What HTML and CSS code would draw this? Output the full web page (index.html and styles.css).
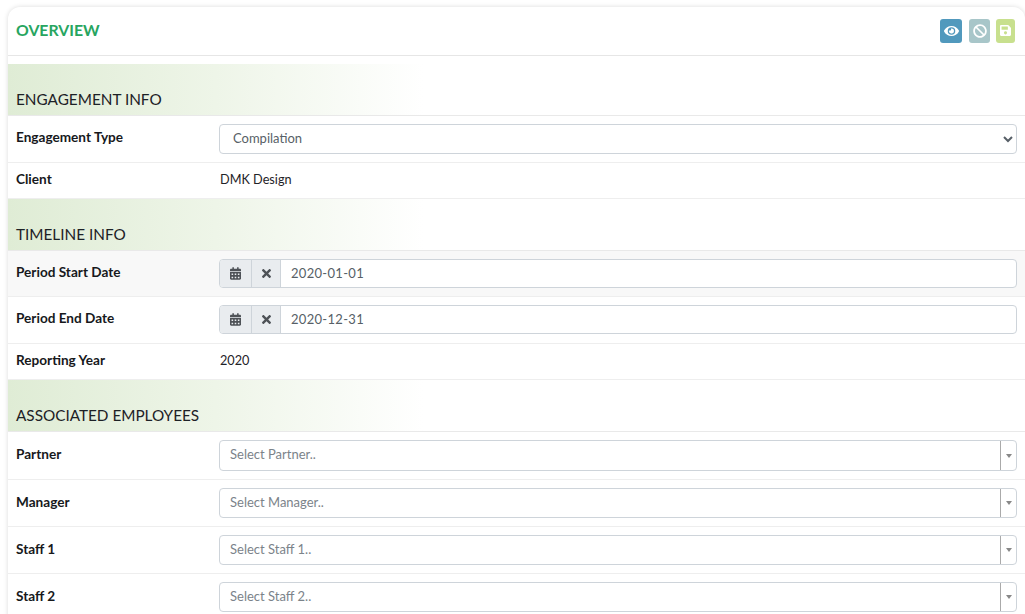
FILE: index.html
```html
<!DOCTYPE html>
<html lang="en">
<head>
<meta charset="utf-8">
<title>Overview</title>
<link rel="stylesheet" href="styles.css">
</head>
<body>
<main class="card">
  <header class="card-head">
    <h1 class="card-title">OVERVIEW</h1>
    <div class="actions">
      <button class="btn btn-view" type="button" aria-label="View"><svg class="btn-ico eye" viewBox="0 0 576 512"><path d="M572.52 241.4C518.29 135.59 410.93 64 288 64S57.68 135.64 3.48 241.41a32.35 32.35 0 0 0 0 29.19C57.71 376.41 165.07 448 288 448s230.32-71.64 284.52-177.41a32.35 32.35 0 0 0 0-29.19zM288 400a144 144 0 1 1 144-144 143.93 143.93 0 0 1-144 144zm0-240a95.31 95.31 0 0 0-25.31 3.79 47.85 47.85 0 0 1-66.9 66.9A95.78 95.78 0 1 0 288 160z"/></svg></button>
      <button class="btn btn-cancel" type="button" aria-label="Cancel"><svg class="btn-ico" viewBox="0 0 512 512"><path d="M256 8C119.034 8 8 119.033 8 256s111.034 248 248 248 248-111.034 248-248S392.967 8 256 8zm130.108 117.892c65.448 65.448 70 165.481 20.677 235.637L150.47 105.216c70.204-49.356 170.226-44.735 235.638 20.676zM125.892 386.108c-65.448-65.448-70-165.481-20.677-235.637L361.53 406.784c-70.203 49.356-170.226 44.736-235.638-20.676z"/></svg></button>
      <button class="btn btn-save" type="button" aria-label="Save"><svg class="btn-ico save" viewBox="0 0 448 512"><path d="M433.941 129.941l-83.882-83.882A48 48 0 0 0 316.118 32H48C21.49 32 0 53.49 0 80v352c0 26.51 21.49 48 48 48h352c26.51 0 48-21.49 48-48V163.882a48 48 0 0 0-14.059-33.941zM224 416c-35.346 0-64-28.654-64-64 0-35.346 28.654-64 64-64s64 28.654 64 64c0 35.346-28.654 64-64 64zm96-304.52V212c0 6.627-5.373 12-12 12H76c-6.627 0-12-5.373-12-12V108c0-6.627 5.373-12 12-12h228.52c3.183 0 6.235 1.264 8.485 3.515l3.48 3.48A11.996 11.996 0 0 1 320 111.48z"/></svg></button>
    </div>
  </header>

  <section class="group">
    <h2 class="band">ENGAGEMENT INFO</h2>
    <div class="row row-field">
      <label class="lbl">Engagement Type</label>
      <select class="native"><option>Compilation</option></select>
    </div>
    <div class="row row-text">
      <span class="lbl">Client</span>
      <span class="val">DMK Design</span>
    </div>
  </section>

  <section class="group">
    <h2 class="band">TIMELINE INFO</h2>
    <div class="row row-field row-hover">
      <label class="lbl">Period Start Date</label>
      <div class="date">
        <span class="addon"><svg class="ico-cal" viewBox="0 0 448 512"><path d="M0 464c0 26.5 21.5 48 48 48h352c26.5 0 48-21.5 48-48V192H0v272zm320-196c0-6.6 5.4-12 12-12h40c6.6 0 12 5.4 12 12v40c0 6.6-5.4 12-12 12h-40c-6.6 0-12-5.4-12-12v-40zm0 128c0-6.6 5.4-12 12-12h40c6.6 0 12 5.4 12 12v40c0 6.6-5.4 12-12 12h-40c-6.6 0-12-5.4-12-12v-40zM192 268c0-6.6 5.4-12 12-12h40c6.6 0 12 5.4 12 12v40c0 6.6-5.4 12-12 12h-40c-6.6 0-12-5.4-12-12v-40zm0 128c0-6.6 5.4-12 12-12h40c6.6 0 12 5.4 12 12v40c0 6.6-5.4 12-12 12h-40c-6.6 0-12-5.4-12-12v-40zM64 268c0-6.6 5.4-12 12-12h40c6.6 0 12 5.4 12 12v40c0 6.6-5.4 12-12 12H76c-6.6 0-12-5.4-12-12v-40zm0 128c0-6.6 5.4-12 12-12h40c6.6 0 12 5.4 12 12v40c0 6.6-5.4 12-12 12H76c-6.6 0-12-5.4-12-12v-40zM400 64h-48V16c0-8.8-7.2-16-16-16h-32c-8.8 0-16 7.2-16 16v48H160V16c0-8.8-7.2-16-16-16h-32c-8.8 0-16 7.2-16 16v48H48C21.5 64 0 85.5 0 112v48h448v-48c0-26.5-21.5-48-48-48z"/></svg></span>
        <span class="addon addon-x"><svg class="ico-x" viewBox="0 0 352 512"><path d="M242.72 256l100.07-100.07c12.28-12.28 12.28-32.19 0-44.48l-22.24-22.24c-12.28-12.28-32.19-12.28-44.48 0L176 189.28 75.93 89.21c-12.28-12.28-32.19-12.28-44.48 0L9.21 111.45c-12.28 12.28-12.28 32.19 0 44.48L109.28 256 9.21 356.07c-12.28 12.28-12.28 32.19 0 44.48l22.24 22.24c12.28 12.28 32.2 12.28 44.48 0L176 322.72l100.07 100.07c12.28 12.28 32.2 12.28 44.48 0l22.24-22.24c12.28-12.28 12.28-32.19 0-44.48L242.72 256z"/></svg></span>
        <span class="date-val">2020-01-01</span>
      </div>
    </div>
    <div class="row row-field">
      <label class="lbl">Period End Date</label>
      <div class="date">
        <span class="addon"><svg class="ico-cal" viewBox="0 0 448 512"><path d="M0 464c0 26.5 21.5 48 48 48h352c26.5 0 48-21.5 48-48V192H0v272zm320-196c0-6.6 5.4-12 12-12h40c6.6 0 12 5.4 12 12v40c0 6.6-5.4 12-12 12h-40c-6.6 0-12-5.4-12-12v-40zm0 128c0-6.6 5.4-12 12-12h40c6.6 0 12 5.4 12 12v40c0 6.6-5.4 12-12 12h-40c-6.6 0-12-5.4-12-12v-40zM192 268c0-6.6 5.4-12 12-12h40c6.6 0 12 5.4 12 12v40c0 6.6-5.4 12-12 12h-40c-6.6 0-12-5.4-12-12v-40zm0 128c0-6.6 5.4-12 12-12h40c6.6 0 12 5.4 12 12v40c0 6.6-5.4 12-12 12h-40c-6.6 0-12-5.4-12-12v-40zM64 268c0-6.6 5.4-12 12-12h40c6.6 0 12 5.4 12 12v40c0 6.6-5.4 12-12 12H76c-6.6 0-12-5.4-12-12v-40zm0 128c0-6.6 5.4-12 12-12h40c6.6 0 12 5.4 12 12v40c0 6.6-5.4 12-12 12H76c-6.6 0-12-5.4-12-12v-40zM400 64h-48V16c0-8.8-7.2-16-16-16h-32c-8.8 0-16 7.2-16 16v48H160V16c0-8.8-7.2-16-16-16h-32c-8.8 0-16 7.2-16 16v48H48C21.5 64 0 85.5 0 112v48h448v-48c0-26.5-21.5-48-48-48z"/></svg></span>
        <span class="addon addon-x"><svg class="ico-x" viewBox="0 0 352 512"><path d="M242.72 256l100.07-100.07c12.28-12.28 12.28-32.19 0-44.48l-22.24-22.24c-12.28-12.28-32.19-12.28-44.48 0L176 189.28 75.93 89.21c-12.28-12.28-32.19-12.28-44.48 0L9.21 111.45c-12.28 12.28-12.28 32.19 0 44.48L109.28 256 9.21 356.07c-12.28 12.28-12.28 32.19 0 44.48l22.24 22.24c12.28 12.28 32.2 12.28 44.48 0L176 322.72l100.07 100.07c12.28 12.28 32.2 12.28 44.48 0l22.24-22.24c12.28-12.28 12.28-32.19 0-44.48L242.72 256z"/></svg></span>
        <span class="date-val">2020-12-31</span>
      </div>
    </div>
    <div class="row row-text">
      <span class="lbl">Reporting Year</span>
      <span class="val">2020</span>
    </div>
  </section>

  <section class="group">
    <h2 class="band">ASSOCIATED EMPLOYEES</h2>
    <div class="row row-combo">
      <label class="lbl">Partner</label>
      <div class="combo"><span class="combo-text">Select Partner..</span><span class="combo-arrow"><i class="caret"></i></span></div>
    </div>
    <div class="row row-combo">
      <label class="lbl">Manager</label>
      <div class="combo"><span class="combo-text">Select Manager..</span><span class="combo-arrow"><i class="caret"></i></span></div>
    </div>
    <div class="row row-combo">
      <label class="lbl">Staff 1</label>
      <div class="combo"><span class="combo-text">Select Staff 1..</span><span class="combo-arrow"><i class="caret"></i></span></div>
    </div>
    <div class="row row-combo">
      <label class="lbl">Staff 2</label>
      <div class="combo"><span class="combo-text">Select Staff 2..</span><span class="combo-arrow"><i class="caret"></i></span></div>
    </div>
  </section>
</main>
</body>
</html>
```
FILE: styles.css
```css
* { box-sizing: border-box; }
html, body { margin: 0; height: 100%; overflow: hidden; background: #fff; }
body {
  padding: 7px 0 0 8px;
  font-family: "Lato", "Noto Sans", sans-serif;
  font-size: 13px;
  color: #1f2328;
}
.card {
  width: 1017px;
  background: #fff;
  border-radius: 12px 12px 0 0;
  box-shadow: 0 0 5px rgba(0, 0, 0, .14);
}
.card-head {
  height: 49px;
  display: flex;
  align-items: center;
  justify-content: space-between;
  padding: 0 10px 0 8px;
  border-bottom: 1px solid #e6e6e6;
  margin-bottom: 8px;
}
.card-title { margin: 0 0 4px; font-size: 15.8px; font-weight: 700; color: #27a560; }
.actions { display: flex; align-items: center; margin-bottom: 1px; }
.btn {
  border: 0;
  padding: 0;
  height: 24px;
  display: flex;
  align-items: center;
  justify-content: center;
  border-radius: 3px;
}
.btn-view { width: 22px; background: #5199bd; margin-right: 7px; }
.btn-cancel { width: 21px; background: #a8c6c9; margin-right: 6px; }
.btn-save { width: 19px; background: #c8e08e; }
.btn-ico { width: 14px; height: 14px; fill: #fff; display: block; }
.btn-ico.eye { width: 15px; }
.btn-ico.save { width: 11px; height: 13px; }
.band {
  margin: 0;
  height: 52px;
  padding: 24px 8px 0;
  font-size: 15.3px;
  line-height: 22px;
  font-weight: 400;
  color: #1d2126;
  background: linear-gradient(90deg, #dfecd5 0, #eef5e8 50%, #fff 100%) no-repeat 0 0 / 415px 100%;
  border-bottom: 1px solid #e9e9e9;
}
.row {
  display: grid;
  grid-template-columns: 203px 798px;
  align-items: center;
  padding-left: 8px;
  border-bottom: 1px solid #eeeeee;
}
.row-field { height: 47px; }
.row-field.row-hover { height: 46px; }
.row-text { height: 36px; }
.row-combo { height: 47px; }
.band + .row-combo { height: 48px; }
.row-hover { background: #f8f8f8; }
.lbl { font-weight: 700; font-size: 13.6px; color: #17191c; margin-bottom: 4px; }
.row-combo .lbl { margin-bottom: 3px; }
.val { font-size: 12.7px; padding-left: 1px; margin-bottom: 4px; }
.native {
  width: 798px;
  height: 30px;
  border: 1px solid #ced4da;
  border-radius: 4px;
  background-color: #fff;
  padding: 0 8px 2px 9px;
  font-family: inherit;
  font-size: 13px;
  color: #575f67;
}
.date {
  display: flex;
  height: 29px;
  margin-bottom: 1px;
  border: 1px solid #ced4da;
  border-radius: 4px;
  overflow: hidden;
  background: #fff;
}
.addon {
  flex: 0 0 32px;
  display: flex;
  align-items: center;
  justify-content: center;
  background: #e9ecef;
  border-right: 1px solid #ced4da;
}
.addon-x { flex-basis: 29px; }
.ico-cal { width: 11px; height: 13px; fill: #4e5257; }
.ico-x { width: 9px; height: 13px; fill: #4e5257; }
.date-val { padding-left: 10px; line-height: 26px; font-size: 13px; letter-spacing: .3px; color: #575f67; }
.combo {
  display: flex;
  height: 30px;
  border: 1px solid #ced4da;
  border-radius: 4px;
}
.band + .row-combo .combo { height: 31px; }
.combo-text { flex: 1; padding-left: 10px; line-height: 26px; font-size: 13px; color: #7b838a; }
.combo-arrow {
  flex: 0 0 16px;
  display: flex;
  align-items: center;
  justify-content: center;
  border-left: 1px solid #aaa;
}
.caret {
  width: 0;
  height: 0;
  border: 3px solid transparent;
  border-top: 4px solid #888;
  border-bottom: 0;
}
```
